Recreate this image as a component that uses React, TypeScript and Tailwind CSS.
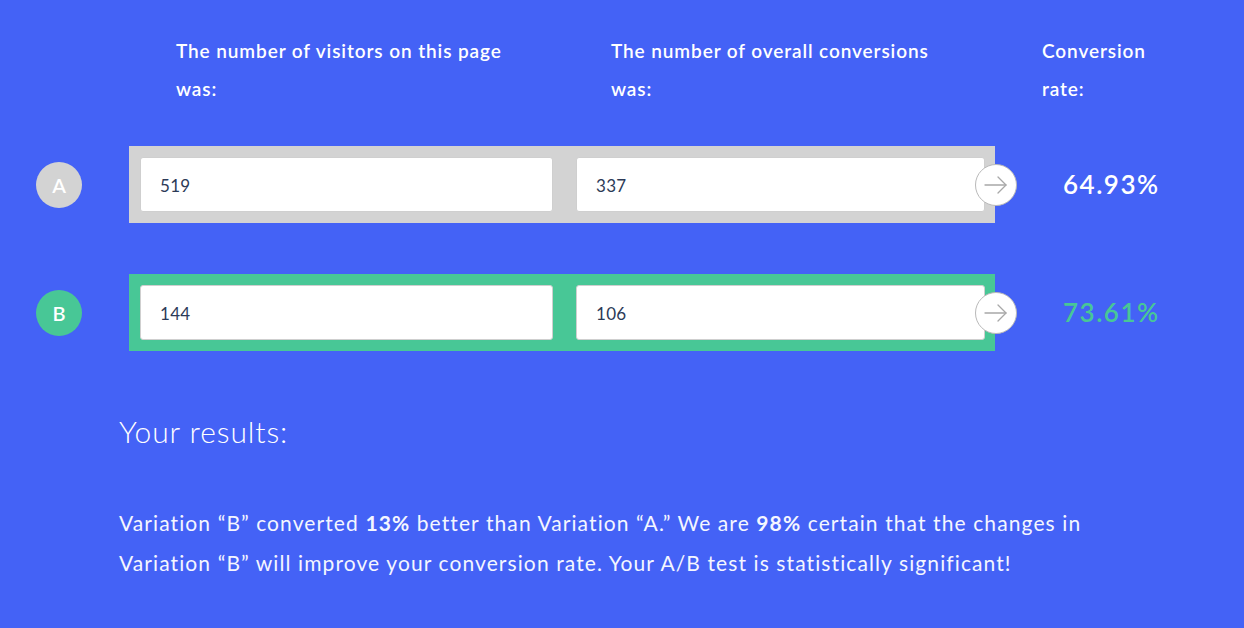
import React from "react";

const Arrow = () => (
  <div className="absolute right-[-22px] top-1/2 -translate-y-1/2 w-[42px] h-[42px] rounded-full bg-white border border-[#b9b9b9] flex items-center justify-center">
    <svg width="28" height="20" viewBox="0 0 28 20" fill="none" stroke="#a8a8a8" strokeWidth="1.3" strokeLinecap="round" strokeLinejoin="round">
      <path d="M3 10 H24" />
      <path d="M16 2 L24 10 L16 18" />
    </svg>
  </div>
);

const Row = ({
  letter,
  a,
  b,
  pct,
  color,
  pctClass,
}: {
  letter: string;
  a: string;
  b: string;
  pct: string;
  color: string;
  pctClass: string;
}) => (
  <div className="flex items-center pl-[36px]">
    <div
      className={`w-[46px] h-[46px] rounded-full ${color} flex items-center justify-center text-white text-[20px] font-semibold`}
    >
      {letter}
    </div>
    <div className={`relative ml-[47px] w-[866px] h-[77px] ${color} flex items-center pl-[11px] pr-[10px] gap-[23px]`}>
      <div className="w-[413px] h-[55px] bg-white rounded-[3px] border border-[#cfcfcf] flex items-center pl-[19px] pt-[3px] text-[17px] tracking-[0.3px] text-[#2c3a57]">
        {a}
      </div>
      <div className="w-[409px] h-[55px] bg-white rounded-[3px] border border-[#cfcfcf] flex items-center pl-[19px] pt-[3px] text-[17px] tracking-[0.3px] text-[#2c3a57]">
        {b}
      </div>
      <Arrow />
    </div>
    <div className={`ml-[68px] text-[26px] font-semibold tracking-[1.5px] ${pctClass}`}>{pct}</div>
  </div>
);

export default function App() {
  return (
    <div
      className="w-[1244px] h-[628px] bg-[#4462F6] text-white overflow-hidden"
      style={{ fontFamily: "Lato, 'Noto Sans', sans-serif" }}
    >
      <div className="pt-[32px] flex text-[19px] font-semibold leading-[38px] tracking-[0.9px]">
        <div className="ml-[176px] w-[435px]">
          The number of visitors on this page
          <br />
          was:
        </div>
        <div className="w-[431px]">
          The number of overall conversions
          <br />
          was:
        </div>
        <div>
          Conversion
          <br />
          rate:
        </div>
      </div>
      <div className="mt-[38px] flex flex-col gap-[51px]">
        <Row letter="A" a="519" b="337" pct="64.93%" color="bg-[#D3D3D3]" pctClass="text-white" />
        <Row letter="B" a="144" b="106" pct="73.61%" color="bg-[#48C796]" pctClass="text-[#48C796]" />
      </div>
      <div className="ml-[119px] mt-[63px] text-[30px] font-light leading-[35px] tracking-[0.9px]">Your results:</div>
      <p className="ml-[119px] mt-[54px] w-[1110px] text-[21px] leading-[40px] tracking-[1.1px] text-[#f4f6ff]">
        Variation “B” converted <b className="font-bold">13%</b> better than Variation “A.” We are{" "}
        <b className="font-bold">98%</b> certain that the changes in
        <br />
        Variation “B” will improve your conversion rate. Your A/B test is statistically significant!
      </p>
    </div>
  );
}
